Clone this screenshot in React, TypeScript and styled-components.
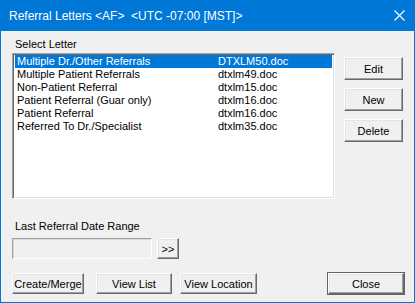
import React, { useState } from 'react';
import styled, { createGlobalStyle } from 'styled-components';

const GlobalStyle = createGlobalStyle`
  * { box-sizing: border-box; }
  html, body { margin: 0; padding: 0; background: #f0f0f0; }
  body { font-family: 'Liberation Sans', Arial, sans-serif; font-size: 11px; color: #000; }
`;

interface ILetter {
  name: string;
  file: string;
}

const letters: ILetter[] = [
  { name: 'Multiple Dr./Other Referrals', file: 'DTXLM50.doc' },
  { name: 'Multiple Patient Referrals', file: 'dtxlm49.doc' },
  { name: 'Non-Patient Referral', file: 'dtxlm15.doc' },
  { name: 'Patient Referral (Guar only)', file: 'dtxlm16.doc' },
  { name: 'Patient Referral', file: 'dtxlm16.doc' },
  { name: 'Referred To Dr./Specialist', file: 'dtxlm35.doc' }
];

const Window = styled.div`
  width: 415px;
  height: 303px;
  display: flex;
  flex-direction: column;
  background: #f0f0f0;
  border: 1px solid #0078d7;
  border-top: none;
`;

const TitleBar = styled.div`
  height: 31px;
  flex: none;
  display: flex;
  align-items: center;
  justify-content: space-between;
  background: #0078d7;
  color: #fff;
  font-size: 12px;
  padding: 0 10px 0 9px;
  margin: 0 -1px;
`;

const Body = styled.div`
  flex: 1;
  display: flex;
  flex-direction: column;
  padding: 7px 10px 0 11px;
`;

const Label = styled.div`
  height: 13px;
  line-height: 13px;
  padding-left: 3px;
`;

const MainRow = styled.div`
  display: flex;
  gap: 9px;
  margin-top: 2px;
`;

const ListBox = styled.div`
  width: 323px;
  height: 146px;
  background: #fff;
  border: 1px solid;
  border-color: #a0a0a0 #fff #fff #a0a0a0;
  box-shadow: inset 1px 1px 0 #696969, inset -1px -1px 0 #e3e3e3;
  padding: 1px 2px 0 2px;
`;

const ListRow = styled.div<{ $selected?: boolean }>`
  display: grid;
  grid-template-columns: 201px 1fr;
  height: 13px;
  line-height: 13px;
  padding-left: 2px;
  background: ${(p) => (p.$selected ? '#0078d7' : 'transparent')};
  color: ${(p) => (p.$selected ? '#fff' : '#000')};
  white-space: nowrap;
`;

const SideButtons = styled.div`
  display: flex;
  flex-direction: column;
  gap: 8px;
  margin-top: 4px;
`;

const Button = styled.button<{ $w: number; $h?: number; $ml?: number; $default?: boolean }>`
  width: ${(p) => p.$w}px;
  height: ${(p) => p.$h ?? 21}px;
  margin-left: ${(p) => p.$ml ?? 0}px;
  padding: 0;
  font: inherit;
  font-size: 11px;
  color: #000;
  background: #f0f0f0;
  border: 1px solid;
  border-color: #fff #696969 #696969 #fff;
  box-shadow: inset -1px -1px 0 #a0a0a0, inset 1px 1px 0 #e3e3e3;
  outline: ${(p) => (p.$default ? '1px solid #646464' : 'none')};
  outline-offset: 0;
  cursor: default;
`;

const RangeSection = styled.div`
  display: flex;
  flex-direction: column;
  margin-top: 21px;
`;

const FieldRow = styled.div`
  display: flex;
  gap: 5px;
  margin-top: 5px;
`;

const Field = styled.div`
  width: 140px;
  height: 21px;
  background: #f0f0f0;
  border: 1px solid;
  border-color: #a0a0a0 #fff #fff #a0a0a0;
  box-shadow: inset 1px 1px 0 #d8d8d8;
`;

const BottomRow = styled.div`
  display: flex;
  align-items: center;
  margin-top: 14px;
`;

const Spacer = styled.div`
  flex: 1;
`;

function CloseIcon () {
  return (
    <svg width='11' height='11' viewBox='0 0 11 11'>
      <path d='M0.5 0.5 L10.5 10.5 M10.5 0.5 L0.5 10.5' stroke='#fff' strokeWidth='1.1' />
    </svg>
  );
}

export default function App () {
  const [selected, setSelected] = useState(0);

  return (
    <>
      <GlobalStyle />
      <Window>
        <TitleBar>
          <span>Referral Letters &lt;AF&gt;&nbsp; &lt;UTC -07:00 [MST]&gt;</span>
          <CloseIcon />
        </TitleBar>
        <Body>
          <Label>Select Letter</Label>
          <MainRow>
            <ListBox>
              {letters.map((l, i) => (
                <ListRow
                  $selected={i === selected}
                  key={i}
                  onClick={() => setSelected(i)}
                >
                  <span>{l.name}</span>
                  <span>{l.file}</span>
                </ListRow>
              ))}
            </ListBox>
            <SideButtons>
              <Button $h={23} $w={59}>Edit</Button>
              <Button $h={23} $w={59}>New</Button>
              <Button $h={23} $w={59}>Delete</Button>
            </SideButtons>
          </MainRow>
          <RangeSection>
            <Label>Last Referral Date Range</Label>
            <FieldRow>
              <Field />
              <Button $w={22}>&gt;&gt;</Button>
            </FieldRow>
          </RangeSection>
          <BottomRow>
            <Button $w={72}>Create/Merge</Button>
            <Button $ml={12} $w={76}>View List</Button>
            <Button $ml={8} $w={77}>View Location</Button>
            <Spacer />
            <Button $default $w={76}>Close</Button>
          </BottomRow>
        </Body>
      </Window>
    </>
  );
}
